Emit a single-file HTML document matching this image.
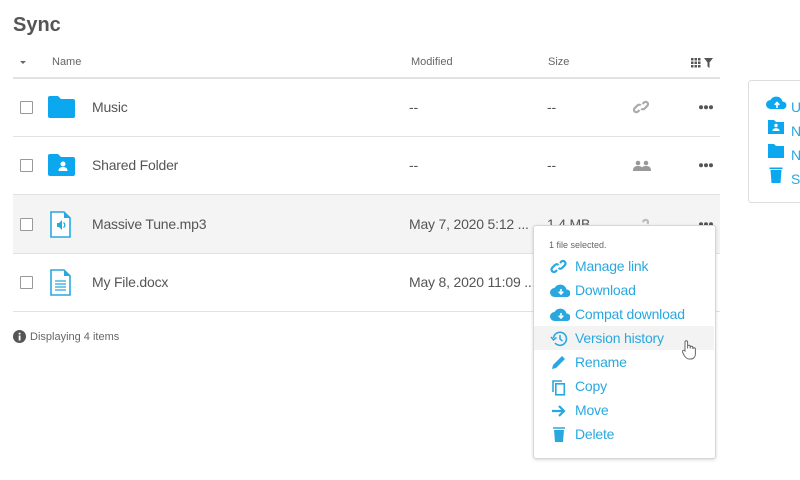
<!DOCTYPE html>
<html><head><style>
body{margin:0;width:800px;height:480px;background:#fff;font-family:"Liberation Sans",sans-serif;color:#555;position:relative;overflow:hidden}
.a{position:absolute}
.t{font-size:14px;letter-spacing:-0.2px}
.line{position:absolute;left:13px;width:707px;height:1px;background:#e2e2e2}
.cb{position:absolute;left:20px;width:11px;height:11px;border:1px solid #999;border-radius:1px;background:#fff}
.mi{position:absolute;left:575px;font-size:14px;color:#29a8e0;letter-spacing:-0.2px}
</style></head><body>
<div class="a" style="left:13px;top:14px;font-size:20px;font-weight:bold;color:#555">Sync</div>
<div class="a" style="left:20px;top:61px;width:0;height:0;border-left:3px solid transparent;border-right:3px solid transparent;border-top:3px solid #667"></div>
<div class="a" style="left:52px;top:56px;font-size:11px;color:#666">Name</div>
<div class="a" style="left:411px;top:56px;font-size:11px;color:#666">Modified</div>
<div class="a" style="left:548px;top:56px;font-size:11px;color:#666">Size</div>
<svg class="a" style="left:691px;top:58px" width="24" height="10"><g fill="#555"><rect x="0" y="0" width="2.5" height="2.5"/><rect x="3.5" y="0" width="2.5" height="2.5"/><rect x="7" y="0" width="2.5" height="2.5"/><rect x="0" y="3.5" width="2.5" height="2.5"/><rect x="3.5" y="3.5" width="2.5" height="2.5"/><rect x="7" y="3.5" width="2.5" height="2.5"/><rect x="0" y="7" width="2.5" height="2.5"/><rect x="3.5" y="7" width="2.5" height="2.5"/><rect x="7" y="7" width="2.5" height="2.5"/><path d="M13 0h9l-3.5 4.5V10l-2-1.5V4.5z"/></g></svg>
<div class="line" style="top:77px;height:2px"></div>
<div class="a" style="left:13px;top:195px;width:707px;height:58px;background:#f4f4f4"></div>
<div class="line" style="top:136px"></div><div class="line" style="top:194px"></div><div class="line" style="top:253px"></div><div class="line" style="top:311px"></div>
<div class="cb" style="top:101px"></div><div class="cb" style="top:159px"></div><div class="cb" style="top:218px"></div><div class="cb" style="top:276px"></div>
<svg class="a" style="left:48px;top:96px" width="27" height="22"><path d="M0 2a2 2 0 0 1 2-2h8l3 3h12a2 2 0 0 1 2 2v15a2 2 0 0 1-2 2H2a2 2 0 0 1-2-2z" fill="#0ba8ef"/></svg>
<svg class="a" style="left:48px;top:154px" width="27" height="22"><path d="M0 2a2 2 0 0 1 2-2h8l3 3h12a2 2 0 0 1 2 2v15a2 2 0 0 1-2 2H2a2 2 0 0 1-2-2z" fill="#0ba8ef"/><circle cx="15" cy="10" r="2.5" fill="#fff"/><path d="M10.5 17c0-3 2-4 4.5-4s4.5 1 4.5 4z" fill="#fff"/></svg>
<svg class="a" style="left:50px;top:211px" width="22" height="27"><path d="M1 1h13l6 6v19H1z" fill="#fff" stroke="#29a8e0" stroke-width="1.6"/><path d="M14 1v6h6" fill="#29a8e0"/><path d="M7 12h2l3-3v10l-3-3H7z" fill="#29a8e0"/><path d="M13.5 11.5a3 3 0 0 1 0 5" stroke="#29a8e0" fill="none" stroke-width="1.3"/></svg>
<svg class="a" style="left:50px;top:269px" width="22" height="27"><path d="M1 1h13l6 6v19H1z" fill="#fff" stroke="#29a8e0" stroke-width="1.6"/><path d="M14 1v6h6" fill="#29a8e0"/><path d="M5 12h11M5 15h11M5 18h11M5 21h11" stroke="#29a8e0" stroke-width="1.2"/></svg>
<div class="a t" style="left:92px;top:99px">Music</div>
<div class="a t" style="left:92px;top:157px">Shared Folder</div>
<div class="a t" style="left:92px;top:216px">Massive Tune.mp3</div>
<div class="a t" style="left:92px;top:274px">My File.docx</div>
<div class="a t" style="left:409px;top:99px">--</div><div class="a t" style="left:547px;top:99px">--</div>
<div class="a t" style="left:409px;top:157px">--</div><div class="a t" style="left:547px;top:157px">--</div>
<div class="a t" style="left:409px;top:216px">May 7, 2020 5:12 ...</div><div class="a t" style="left:547px;top:216px">1.4 MB</div>
<div class="a t" style="left:409px;top:274px">May 8, 2020 11:09 ...</div>
<svg class="a" style="left:633px;top:99px" width="16" height="16" fill="none" stroke="#aaa" stroke-width="2.2"><path d="M6.5 11l-1.5 1.5a2.3 2.3 0 0 1-3.3-3.3l2.8-2.8a2.3 2.3 0 0 1 3.3 0M9.5 5l1.5-1.5a2.3 2.3 0 0 1 3.3 3.3l-2.8 2.8a2.3 2.3 0 0 1-3.3 0"/></svg>
<svg class="a" style="left:633px;top:217px" width="16" height="10" fill="none" stroke="#bbb" stroke-width="2.2"><path d="M9.5 5l1.5-1.5a2.3 2.3 0 0 1 3.3 3.3"/></svg>
<svg class="a" style="left:633px;top:160px" width="18" height="11"><g fill="#999"><circle cx="5" cy="3" r="2.3"/><circle cx="13" cy="3" r="2.3"/><path d="M0 11c0-4 2-5 5-5s5 1 5 5zM8 11c0-4 2-5 5-5s5 1 5 5z"/></g></svg>
<svg class="a" style="left:699px;top:105px" width="14" height="5" fill="#555"><circle cx="2" cy="2.2" r="2"/><circle cx="7" cy="2.2" r="2"/><circle cx="12" cy="2.2" r="2"/></svg>
<svg class="a" style="left:699px;top:163px" width="14" height="5" fill="#555"><circle cx="2" cy="2.2" r="2"/><circle cx="7" cy="2.2" r="2"/><circle cx="12" cy="2.2" r="2"/></svg>
<svg class="a" style="left:699px;top:222px" width="14" height="5" fill="#555"><circle cx="2" cy="2.2" r="2"/><circle cx="7" cy="2.2" r="2"/><circle cx="12" cy="2.2" r="2"/></svg>
<svg class="a" style="left:13px;top:330px" width="13" height="13"><circle cx="6.5" cy="6.5" r="6.5" fill="#555"/><rect x="5.7" y="5.5" width="1.8" height="5" fill="#fff"/><circle cx="6.6" cy="3.6" r="1" fill="#fff"/></svg>
<div class="a" style="left:30px;top:331px;font-size:11px;color:#666">Displaying 4 items</div>
<div class="a" style="left:748px;top:80px;width:60px;height:121px;border:1px solid #ddd;border-radius:3px"></div>
<svg class="a" style="left:766px;top:94px" width="22" height="92"><g fill="#0ba8ef"><path d="M4.5 15a4.5 4.5 0 0 1 0-9 6.5 6.5 0 0 1 12 1.5 3.8 3.8 0 0 1 1 7.5z"/><path d="M2 26h6l2 2h8v12H2z"/><path d="M2 50h6l2 2h8v12H2z"/><path d="M4.5 76h11l-1 13h-9zM3.5 73.5h13v1.6h-13z"/></g><path d="M11 14V8.5m-2.3 2.3L11 8.5l2.3 2.3" stroke="#fff" stroke-width="1.6" fill="none"/><circle cx="10" cy="31.5" r="1.7" fill="#fff"/><path d="M6.5 37c0-2 1.5-2.8 3.5-2.8s3.5.8 3.5 2.8z" fill="#fff"/></svg>
<div class="a" style="left:791px;top:95px;font-size:14px;color:#29a8e0;line-height:24px">U<br>N<br>N<br>S</div>
<div class="a" style="left:533px;top:225px;width:181px;height:232px;border:1px solid #d6d6d6;border-radius:3px;background:#fff;box-shadow:0 1px 3px rgba(0,0,0,.15)"></div>
<div class="a" style="left:534px;top:326px;width:180px;height:24px;background:#f3f3f3"></div>
<div class="a" style="left:549px;top:240px;font-size:9px;color:#666">1 file selected.</div>
<div class="mi" style="top:258px">Manage link</div>
<div class="mi" style="top:282px">Download</div>
<div class="mi" style="top:306px">Compat download</div>
<div class="mi" style="top:330px">Version history</div>
<div class="mi" style="top:354px">Rename</div>
<div class="mi" style="top:378px">Copy</div>
<div class="mi" style="top:402px">Move</div>
<div class="mi" style="top:426px">Delete</div>
<svg class="a" style="left:550px;top:258px" width="20" height="190" fill="none" stroke="#29a8e0" stroke-width="2.2">
<path d="M7 12l-1.5 1.5a2.5 2.5 0 0 1-3.5-3.5l3-3a2.5 2.5 0 0 1 3.5 0M10 5l1.5-1.5a2.5 2.5 0 0 1 3.5 3.5l-3 3a2.5 2.5 0 0 1-3.5 0"/>
<path d="M4.5 39a4.5 4.5 0 0 1 0-9 6.5 6.5 0 0 1 12 1.5 3.8 3.8 0 0 1 1 7.5z" fill="#29a8e0" stroke="none"/><path d="M11 31v5m-2.3-2.3L11 36l2.3-2.3" stroke="#fff" stroke-width="1.6"/>
<path d="M4.5 63a4.5 4.5 0 0 1 0-9 6.5 6.5 0 0 1 12 1.5 3.8 3.8 0 0 1 1 7.5z" fill="#29a8e0" stroke="none"/><path d="M11 55v5m-2.3-2.3L11 60l2.3-2.3" stroke="#fff" stroke-width="1.6"/>
<path d="M3.5 80a6.5 6.5 0 1 1 1.5 5" stroke-width="1.6"/><path d="M1 79l2.5 3 3-2.5" stroke-width="1.5"/><path d="M10 77v4l2.5 2" stroke-width="1.5"/>
<path d="M2 111l1-4 9-9 3 3-9 9z" fill="#29a8e0" stroke="none"/>
<path d="M3 134v-11h9" stroke-width="1.6"/><rect x="5.8" y="125.8" width="8.5" height="11" stroke-width="1.6"/>
<path d="M2 153h12M9 148l5 5-5 5"/>
<path d="M4 172h10l-1 12H5z" fill="#29a8e0" stroke="none"/><path d="M3 170h12" stroke-width="1.5"/>
</svg>
<svg class="a" style="left:681px;top:339px" width="16" height="21"><path d="M4 12V3a1.3 1.3 0 0 1 2.6 0v6.5V7.5a1.3 1.3 0 0 1 2.6 0v2V8.5a1.3 1.3 0 0 1 2.6 0v1.5a1.3 1.3 0 0 1 2.6 0v5c0 3-2 5-4.5 5H8c-2 0-3-1-4.5-3L1.5 13a1.3 1.3 0 0 1 2-1.5z" fill="#fff" stroke="#666" stroke-width="1"/></svg>
</body></html>
